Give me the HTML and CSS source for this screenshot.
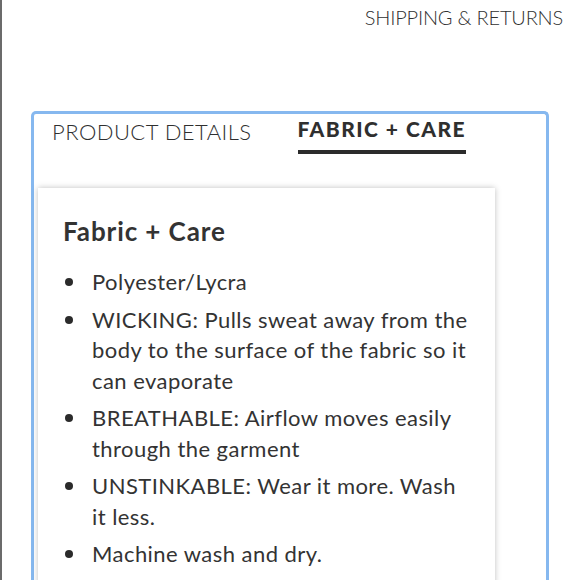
FILE: index.html
```html
<!DOCTYPE html>
<html lang="en">

<head>
  <meta charset="UTF-8">
  <meta name="viewport" content="width=device-width, initial-scale=1.0">
  <title>Fabric + Care</title>
  <link rel="stylesheet" href="styles.css">
</head>

<body>
  <div class="page">
    <div class="top-link">SHIPPING &amp; RETURNS</div>

    <div class="tabs-box">
      <div class="tabs">
        <div class="tab">PRODUCT DETAILS</div>
        <div class="tab tab-active">FABRIC + CARE</div>
      </div>

      <div class="card">
        <h2>Fabric + Care</h2>
        <ul class="care-list">
          <li>Polyester/Lycra</li>
          <li>WICKING: Pulls sweat away from the body to the surface of the fabric so it can evaporate</li>
          <li>BREATHABLE: Airflow moves easily through the garment</li>
          <li>UNSTINKABLE: Wear it more. Wash it less.</li>
          <li>Machine wash and dry.</li>
        </ul>
      </div>
    </div>
  </div>
</body>

</html>
```

FILE: styles.css
```css
body {
  margin: 0;
  font-family: Lato, "Noto Sans", sans-serif;
  color: #333;
  background: #fff;
}

.page {
  height: 580px;
  overflow: hidden;
  border-left: 2px solid #6b6b6b;
}

.top-link {
  text-align: right;
  font-size: 20px;
  font-weight: 300;
  line-height: 24px;
  letter-spacing: -0.2px;
  padding: 5px 17px 0 0;
  color: #2f2f2f;
}

.tabs-box {
  margin: 82px 0 0 29px;
  width: 512px;
  min-height: 500px;
  border: 3px solid #86b8ef;
  border-bottom: none;
  border-radius: 5px 5px 0 0;
}

.tabs {
  display: flex;
  align-items: flex-start;
  padding-left: 18px;
}

.tab {
  font-size: 22px;
  font-weight: 300;
  line-height: 26px;
  letter-spacing: 0.45px;
  margin-top: 5px;
  color: #2f2f2f;
}

.tab-active {
  margin: 2px 0 0 46px;
  font-size: 21px;
  font-weight: 900;
  letter-spacing: 1.45px;
  padding-bottom: 8px;
  border-bottom: 4px solid #2b2b2b;
}

.card {
  margin: 34px 0 0 4px;
  width: 457px;
  min-height: 420px;
  box-sizing: border-box;
  padding: 28px 25px 0 25px;
  box-shadow: 0 0 6px rgba(0, 0, 0, 0.25);
  background: #fff;
}

h2 {
  margin: 0;
  font-size: 26px;
  font-weight: 700;
  line-height: 30px;
  letter-spacing: 0.9px;
  color: #333;
}

.care-list {
  list-style: none;
  margin: 21px 0 0 0;
  padding: 0 0 0 2px;
  width: 405px;
}

.care-list li {
  display: flex;
  font-size: 22px;
  line-height: 30.5px;
  letter-spacing: 0.45px;
  margin-bottom: 7px;
}

.care-list li::before {
  content: "";
  flex: none;
  width: 8px;
  height: 8px;
  border-radius: 50%;
  background: #2b2b2b;
  margin: 11px 19px 0 0;
}
```
